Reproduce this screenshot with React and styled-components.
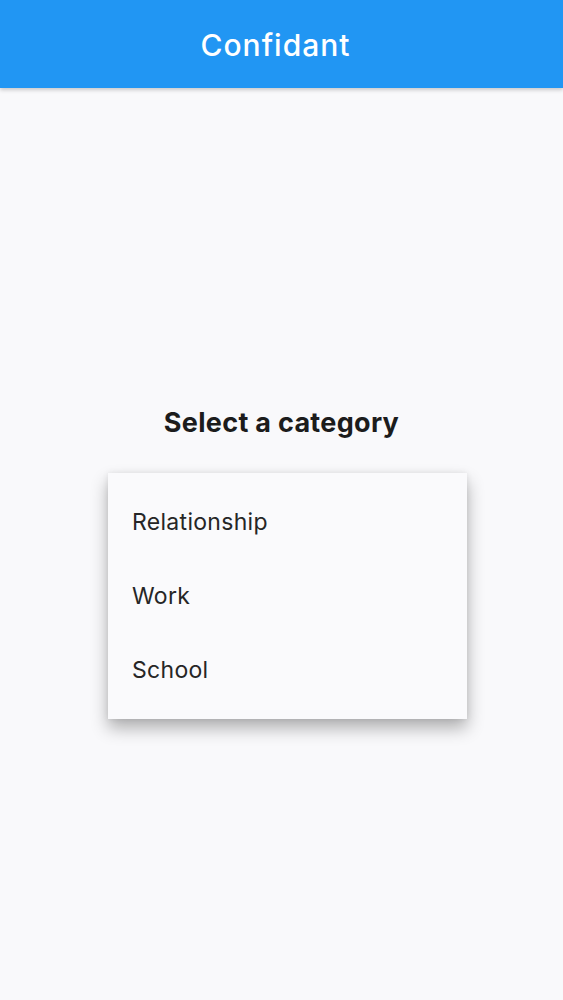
import React from "react";
import styled, { createGlobalStyle } from "styled-components";

const GlobalStyle = createGlobalStyle`
  html, body {
    margin: 0;
    padding: 0;
    background: #f9f9fb;
    font-family: Inter, "Noto Sans", sans-serif;
  }
`;

const Page = styled.div`
  min-height: 1000px;
  display: flex;
  flex-direction: column;
`;

const AppBar = styled.header`
  height: 88px;
  background-color: #2196f3;
  display: flex;
  align-items: center;
  justify-content: center;
  box-shadow: 0 2px 4px rgba(0, 0, 0, 0.2);
  position: relative;
  z-index: 1;
`;

const AppTitle = styled.h1`
  margin: 0;
  padding: 2px 12px 0 0;
  color: #fff;
  font-size: 30px;
  font-weight: 500;
  letter-spacing: 1px;
`;

const Content = styled.main`
  display: flex;
  flex-direction: column;
  align-items: center;
  padding-top: 319px;
`;

const Heading = styled.h2`
  margin: 0;
  height: 32px;
  line-height: 32px;
  font-size: 27px;
  font-weight: 700;
  color: #1c1c1c;
  letter-spacing: 0.3px;
`;

const Menu = styled.ul`
  list-style: none;
  margin: 34px 0 0;
  padding: 12px 0;
  width: 359px;
  background: #fafafc;
  box-shadow: 0 9px 16px rgba(0, 0, 0, 0.3), 0 0 6px rgba(0, 0, 0, 0.08);
  margin-left: 12px;
`;

const MenuItem = styled.li`
  height: 74px;
  display: flex;
  align-items: center;
  padding: 0 24px;
  font-size: 23px;
  color: #262626;
  letter-spacing: 0.3px;
`;

const categories = ["Relationship", "Work", "School"];

export default function App() {
  return (
    <Page>
      <GlobalStyle />
      <AppBar>
        <AppTitle>Confidant</AppTitle>
      </AppBar>
      <Content>
        <Heading>Select a category</Heading>
        <Menu>
          {categories.map((c) => (
            <MenuItem key={c}>{c}</MenuItem>
          ))}
        </Menu>
      </Content>
    </Page>
  );
}
